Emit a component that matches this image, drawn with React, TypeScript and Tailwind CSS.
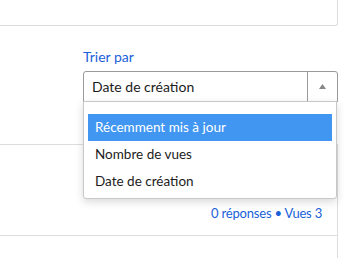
export default function App() {
  return (
    <div className="relative w-[356px] h-[258px] overflow-hidden bg-white text-[#1c1c1c] font-['Lato','Liberation_Sans',sans-serif]">
      <div className="h-[26px] w-[338px] border-b border-r border-[#ddd] rounded-br-[3px]" />

      <div className="w-[338px] pl-[83px] pt-[22px]">
        <div className="text-[14px] leading-[18px] text-[#1a5fd9]">Trier par</div>
        <div className="mt-[5px] h-[31px] flex border border-[#9a9a9a] rounded-t-[3px]">
          <div className="flex-1 flex items-center pl-[8px] text-[14px]">Date de création</div>
          <div className="w-[30px] border-l border-[#9a9a9a] flex items-center justify-center">
            <svg width="7" height="5" viewBox="0 0 7 5">
              <path d="M3.5 0L7 5H0z" fill="#888" />
            </svg>
          </div>
        </div>
      </div>

      <div className="mt-[42px] w-[338px] border-t border-r border-[#ddd]">
        <div className="h-[91px] border-b border-[#ddd] flex items-end justify-end pr-[15px] pb-[12px]">
          <span className="text-[13px] text-[#1a5fd9] tracking-[-0.2px]">0 réponses • Vues 3</span>
        </div>
        <div className="h-[40px]" />
      </div>

      <div className="absolute left-[83px] top-[101px] w-[254px] bg-white border border-[#c8c8c8] rounded-b-[3px] shadow-[0_3px_8px_rgba(0,0,0,0.15)] pt-[12px] pb-[3px] px-[4px] text-[13.5px]">
        <div className="h-[27px] flex items-center pl-[7px] bg-[#4196f2] text-white">Récemment mis à jour</div>
        <div className="h-[27px] flex items-center pl-[7px]">Nombre de vues</div>
        <div className="h-[27px] flex items-center pl-[7px]">Date de création</div>
      </div>
    </div>
  );
}
